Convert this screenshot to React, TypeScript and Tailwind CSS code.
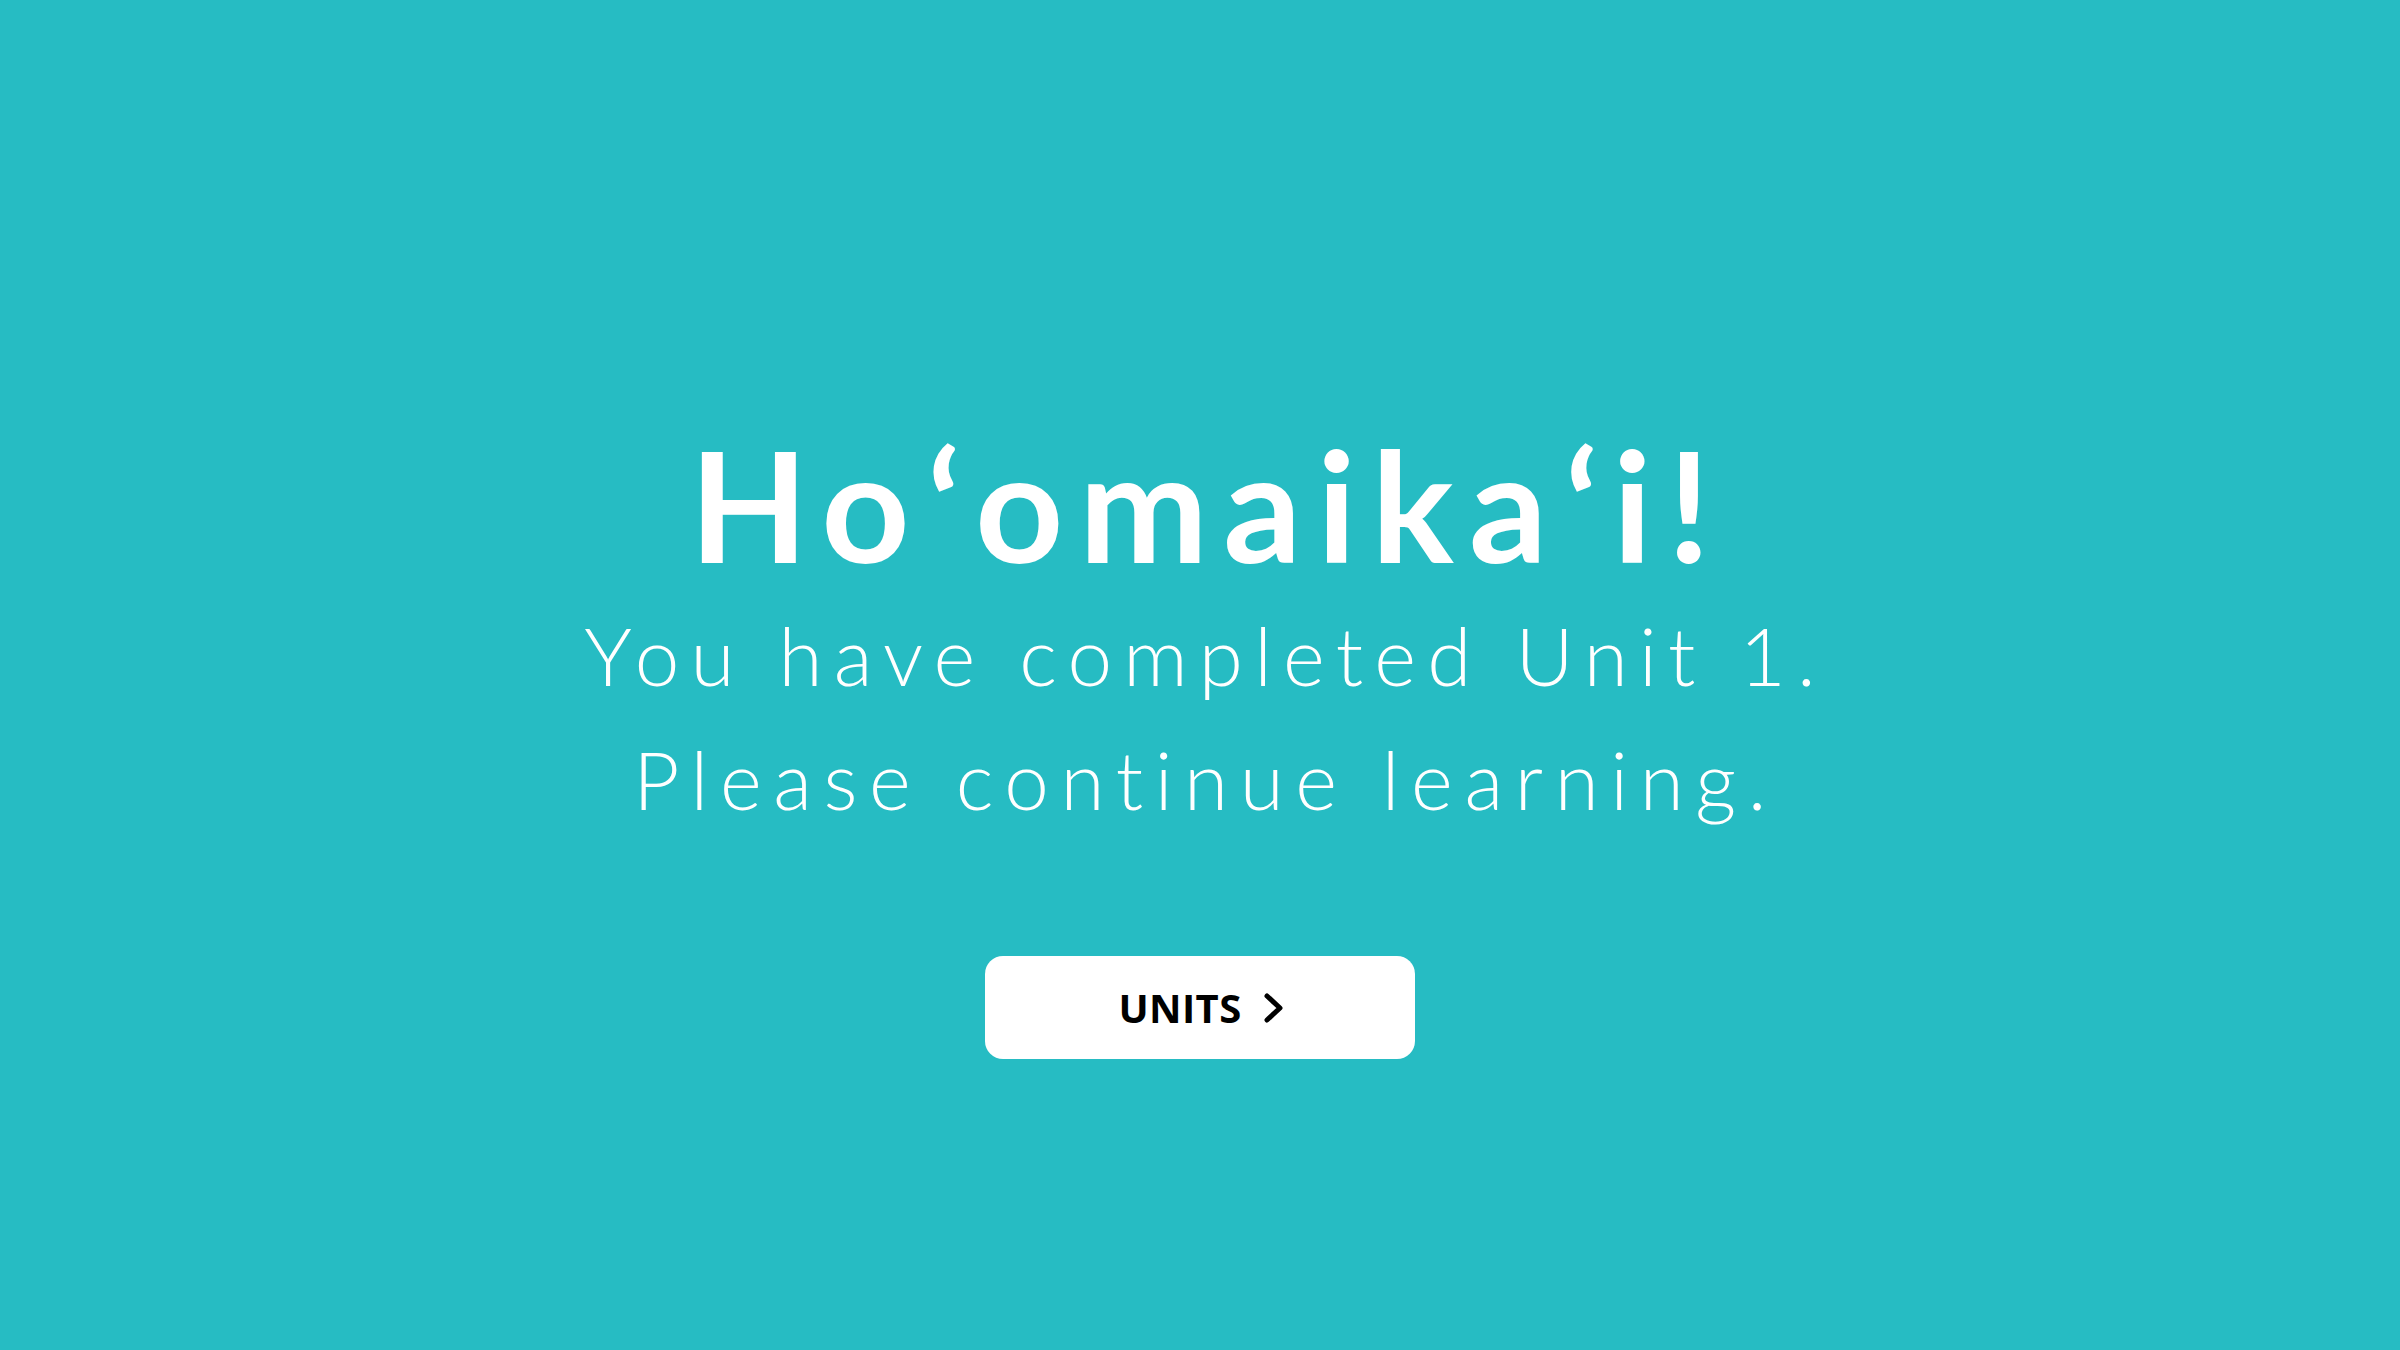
import React from "react";

export default function App() {
  return (
    <div className="w-[2400px] h-[1350px] bg-[#26bcc3] flex flex-col items-center pt-[427px] text-white">
      <h1 className="font-['Lato',sans-serif] text-[154px] leading-none font-bold tracking-[0.1em] pl-[0.1em]">
        Hoʻomaikaʻi!
      </h1>
      <div className="mt-[12px] flex flex-col items-center font-['Lato',sans-serif] text-[80px] leading-[124px] font-light tracking-[0.14em]">
        <p className="pl-[0.14em]">You have completed Unit 1.</p>
        <p className="pl-[0.14em] tracking-[0.145em]">Please continue learning.</p>
      </div>
      <button className="mt-[115px] w-[430px] h-[103px] bg-white rounded-[18px] flex items-center justify-center gap-[20px] text-black pl-[4px]">
        <span className="font-['Open_Sans',sans-serif] text-[40px] font-bold tracking-[0.01em]">
          UNITS
        </span>
        <svg width="24" height="34" viewBox="0 0 24 34" fill="none">
          <path d="M5 5 L18 17 L5 29" stroke="black" strokeWidth="5" strokeLinecap="round" strokeLinejoin="round" />
        </svg>
      </button>
    </div>
  );
}
